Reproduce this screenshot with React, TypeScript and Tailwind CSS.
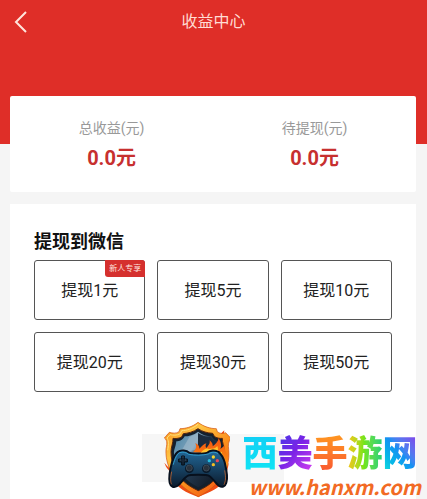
import React from "react";

const stats = [
  { label: "总收益(元)", value: "0.0元" },
  { label: "待提现(元)", value: "0.0元" },
];

const amounts = [
  { value: 1, tag: "新人专享" },
  { value: 5 },
  { value: 10 },
  { value: 20 },
  { value: 30 },
  { value: 50 },
];

function ShieldLogo() {
  return (
    <svg viewBox="21 30 204 234" className="mb-px h-[78px] w-[68px] shrink-0" aria-hidden="true">
      <defs>
        <linearGradient id="rim" x1="0" y1="0" x2="0.9" y2="1">
          <stop offset="0" stopColor="#f58a1a" />
          <stop offset="0.3" stopColor="#ffc443" />
          <stop offset="0.6" stopColor="#fb8f1c" />
          <stop offset="1" stopColor="#f04e12" />
        </linearGradient>
        <linearGradient id="steel" x1="0" y1="0" x2="1" y2="0.7">
          <stop offset="0" stopColor="#4b86a6" />
          <stop offset="0.4" stopColor="#7fa3bc" />
          <stop offset="0.55" stopColor="#22384e" />
          <stop offset="1" stopColor="#121a26" />
        </linearGradient>
        <linearGradient id="pad" x1="0" y1="0" x2="0" y2="1">
          <stop offset="0" stopColor="#22699a" />
          <stop offset="0.5" stopColor="#174263" />
          <stop offset="1" stopColor="#0b1b2d" />
        </linearGradient>
        <linearGradient id="fire" x1="0" y1="0" x2="0" y2="1">
          <stop offset="0" stopColor="#f2520f" />
          <stop offset="0.6" stopColor="#fb8a14" />
          <stop offset="1" stopColor="#ffd14a" />
        </linearGradient>
      </defs>
      {/* outer flames */}
      <path d="M28 158 C34 176 45 184 52 190 L60 212 C66 234 91 246 130 261 C168 246 194 235 202 214 C211 196 219 181 221 159 L210 172 L216 118 L204 90 L208 61 L192 76 L60 76 L44 150 L41 173 Z" fill="#ef4c14" />
      <path
        d="M129 37 C112 51 91 56 75 56 L72 65 C64 71 52 70 43 67 L28 84 C39 91 35 106 33 118 C31 150 43 180 56 197 C75 228 103 246 130 260 C157 246 187 225 203 197 C216 177 224 151 221 119 C219 104 220 94 228 85 L212 68 C203 72 194 71 187 65 L184 56 C166 56 146 50 129 37 Z"
        fill="url(#rim)"
        stroke="#d2500f"
        strokeWidth="2"
      />
      <path d="M129 43 C113 56 94 62 80 62 L76 71 C66 77 53 76 45 74 L36 84 C43 94 40 108 38 121" fill="none" stroke="#ffe07a" strokeWidth="3" />
      <path
        d="M129 56 C115 66 98 70 85 71 L80 81 C70 86 61 86 54 85 C55 98 48 111 48 125 C48 163 64 193 83 211 C97 225 113 234 130 242 C147 234 164 225 178 210 C197 190 209 161 208 124 C208 109 201 98 202 85 C193 86 184 84 178 79 L173 70 C157 69 142 65 129 56 Z"
        fill="#14202d"
        stroke="#59240c"
        strokeWidth="3"
      />
      <path d="M129 65 C116 75 101 79 89 79 C84 90 73 94 64 94 C62 112 56 119 57 131 C60 178 89 211 130 232 C169 211 196 179 198 133 C198 120 193 107 193 94 C183 93 175 89 170 79 C155 78 141 75 129 65 Z" fill="url(#steel)" />
      <path d="M103 81 L129 69 L129 118 L76 128 Z" fill="#a3bccd" opacity="0.6" />
      <path d="M129 69 C142 77 153 80 167 82 C173 91 181 97 190 99 L193 130 L129 121 Z" fill="#1b2b3d" />
      {/* inner flames */}
      <path d="M114 127 C124 118 126 109 121 99 C130 104 134 109 133 116 C142 109 145 102 154 100 C151 106 151 110 154 114 C164 103 165 99 164 91 C172 98 174 104 173 109 C181 104 188 97 191 85 C198 96 201 109 196 117 L210 106 C207 124 217 127 218 142 C221 165 213 181 207 198 L182 158 L169 129 Z" fill="url(#fire)" />
      <path d="M137 128 C145 119 155 113 160 117 C172 116 179 117 187 108 C190 118 190 123 187 130 L201 125 C200 137 209 149 208 168 L190 137 Z" fill="#ffc331" />
      {/* gamepad */}
      <path
        d="M68 126 C77 119 96 121 102 128 C113 132 146 132 157 128 C164 120 181 119 191 126 C199 133 205 143 209 157 C214 177 219 205 214 218 C210 231 201 233 192 228 C181 220 176 207 163 198 C156 193 104 193 97 198 C83 207 78 221 67 228 C57 234 47 231 44 218 C41 202 45 178 51 157 C56 141 61 132 68 126 Z"
        fill="url(#pad)"
        stroke="#07101d"
        strokeWidth="6"
      />
      <path d="M55 163 C60 145 66 132 74 128 C84 124 94 128 101 133 C120 137 144 136 160 132 C171 125 182 126 188 130" fill="none" stroke="#329dcc" strokeWidth="3" strokeLinecap="round" />
      <path d="M50 185 C46 205 46 216 50 223 M209 181 C213 204 212 213 207 224" fill="none" stroke="#e6702b" strokeWidth="2" />
      <path d="M80 138 H88 V147 H97 V156 H88 V165 H80 V156 H71 V147 H80 Z" fill="#172738" stroke="#061019" strokeWidth="3" />
      <path d="M82 141 H86 M74 150 H78 M90 150 H94" stroke="#547087" strokeWidth="2" />
      <circle cx="103" cy="176" r="13" fill="#0a1929" />
      <circle cx="103" cy="174" r="9" fill="#29323d" stroke="#4b5966" strokeWidth="2" />
      <circle cx="154" cy="176" r="13" fill="#0a1929" />
      <circle cx="154" cy="174" r="9" fill="#29323d" stroke="#4b5966" strokeWidth="2" />
      <circle cx="175" cy="141" r="5" fill="#f5d32d" />
      <circle cx="187" cy="152" r="5" fill="#ed4552" />
      <circle cx="175" cy="164" r="5" fill="#f1bd24" />
      <circle cx="163" cy="152" r="5" fill="#28b9dc" />
    </svg>
  );
}

function SiteMark() {
  return (
    <div className="pointer-events-none absolute right-1.5 bottom-0 flex items-end">
      <ShieldLogo />
      <div className="ml-3 flex flex-col">
        <div className="mb-1 flex font-['Noto_Sans_CJK_SC',sans-serif] text-[35px] leading-10 font-black">
          <span className="bg-linear-to-b from-[#12cdf5] to-[#10e4f4] bg-clip-text text-transparent">西</span>
          <span className="bg-linear-to-br from-[#3a35e8] via-[#7a22e6] to-[#d238ef] bg-clip-text text-transparent">美</span>
          <span className="bg-linear-to-b from-[#ff9c1c] to-[#f9582f] bg-clip-text text-transparent">手</span>
          <span className="bg-linear-to-r from-[#f5c21b] via-[#70e51b] to-[#23cf75] bg-clip-text text-transparent">游</span>
          <span className="bg-linear-to-tr from-[#19dfd9] via-[#168ff2] to-[#8428e8] bg-clip-text text-transparent">网</span>
        </div>
        <p className="ml-1.5 font-['Noto_Sans_CJK_SC',sans-serif] text-[20px] leading-6 font-bold text-[#f26a24] italic">www.hanxm.com</p>
      </div>
    </div>
  );
}

export default function App() {
  return (
    <div className="relative h-screen overflow-hidden bg-[#f5f5f5] font-['Roboto','Noto_Sans_CJK_SC',sans-serif] text-[#222]">
      <header className="h-36 bg-[#df2e28]">
        <div className="grid h-11 grid-cols-[44px_1fr_44px] items-center">
          <button type="button" aria-label="返回" className="flex h-11 items-center pl-3.5">
            <svg viewBox="0 0 14 22" className="h-[22px] w-3.5" fill="none" stroke="#ffe5dc" strokeWidth="2">
              <path d="M12 1 L2 11 L12 21" />
            </svg>
          </button>
          <h1 className="text-center text-base text-[#ffdcd4]">收益中心</h1>
        </div>
      </header>

      <main className="-mt-12 flex flex-col gap-3 pr-[11px] pl-2.5">
        <section className="grid h-24 grid-cols-2 rounded-xs bg-white pt-[22px] text-center">
          {stats.map((s) => (
            <div key={s.label}>
              <p className="text-sm leading-5 text-[#999]">{s.label}</p>
              <p className="mt-1.5 text-xl leading-7 font-bold text-[#c7302f]">{s.value}</p>
            </div>
          ))}
        </section>

        <section className="bg-white px-6 py-6">
          <h2 className="text-lg leading-7 font-bold text-[#111]">提现到微信</h2>
          <div className="mt-1 grid grid-cols-3 gap-3">
            {amounts.map((a) => (
              <button key={a.value} type="button" className="relative h-[60px] rounded-[3px] border border-[#555] pt-0.5 text-base">
                提现{a.value}元
                {a.tag && (
                  <span className="absolute -top-px -right-px rounded-tr-[3px] rounded-bl-[3px] bg-[#d5302e] px-1 text-[8px] leading-[17px] text-[#ffe3df]">
                    {a.tag}
                  </span>
                )}
              </button>
            ))}
          </div>
          <button type="button" aria-label="提现" className="mx-auto mt-[42px] block h-12 w-[142px] bg-[#f6f6f6]" />
          <h2 className="mt-3.5 text-lg leading-7 font-bold text-[#111]">提现说明</h2>
        </section>
      </main>

      <SiteMark />
    </div>
  );
}
